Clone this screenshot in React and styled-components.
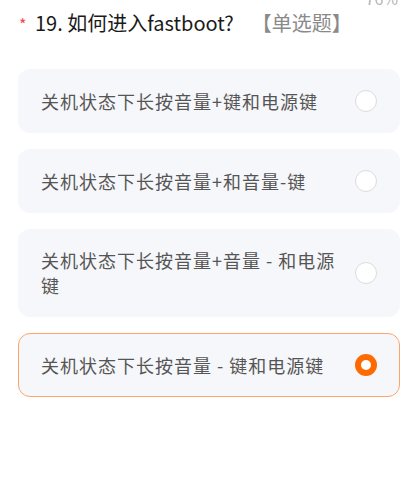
import React from "react";
import styled, { createGlobalStyle } from "styled-components";

const GlobalStyle = createGlobalStyle`
  body {
    margin: 0;
    background: #ffffff;
    font-family: "Noto Sans CJK SC", "Noto Sans", sans-serif;
  }
`;

const Page = styled.div`
  position: relative;
  width: 414px;
  height: 492px;
  overflow: hidden;
  background: #fff;
  padding: 9px 14px 0 18px;
  box-sizing: border-box;
`;

const Progress = styled.span`
  position: absolute;
  top: -14px;
  right: 16px;
  font-size: 16px;
  color: #b5b5b5;
`;

const Title = styled.div`
  display: flex;
  align-items: baseline;
  font-size: 20px;
  color: #1a1a1a;
  line-height: 28px;
  margin-bottom: 31px;
`;

const Star = styled.span`
  color: #f04848;
  font-size: 16px;
  width: 16px;
  padding-left: 1px;
`;

const Tag = styled.span`
  color: #8a8a8a;
  margin-left: 18px;
`;

const Options = styled.div`
  display: flex;
  flex-direction: column;
  gap: 16px;
`;

const Option = styled.div`
  display: flex;
  align-items: center;
  justify-content: space-between;
  min-height: 64px;
  box-sizing: border-box;
  padding: 18px 22px;
  background: #f6f7fa;
  border: 1px solid ${(p) => (p.$active ? "#ffa466" : "#f6f7fa")};
  border-radius: 12px;
`;

const Label = styled.span`
  font-size: 18px;
  line-height: 25px;
  color: #555555;
  letter-spacing: 1px;
  max-width: 300px;
`;

const Radio = styled.span`
  flex: none;
  width: 22px;
  height: 22px;
  box-sizing: border-box;
  border-radius: 50%;
  background: #fff;
  border: ${(p) => (p.$active ? "6px solid #ff6a00" : "1px solid #dcdcdc")};
`;

const options = [
  "关机状态下长按音量+键和电源键",
  "关机状态下长按音量+和音量-键",
  "关机状态下长按音量+音量 - 和电源键",
  "关机状态下长按音量 - 键和电源键",
];

export default function App() {
  const selected = 3;
  return (
    <Page>
      <GlobalStyle />
      <Progress>76%</Progress>
      <Title>
        <Star>*</Star>
        <span>19. 如何进入fastboot?</span>
        <Tag>【单选题】</Tag>
      </Title>
      <Options>
        {options.map((o, i) => (
          <Option key={i} $active={i === selected}>
            <Label>{o}</Label>
            <Radio $active={i === selected} />
          </Option>
        ))}
      </Options>
    </Page>
  );
}
